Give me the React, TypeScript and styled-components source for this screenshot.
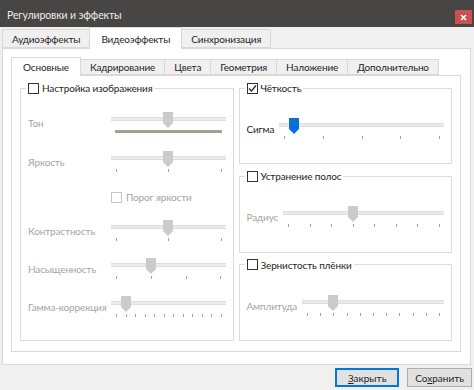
import React from "react";
import styled, { createGlobalStyle } from "styled-components";

const FONT = `Lato, "Noto Sans", "Open Sans", sans-serif`;

const GlobalStyle = createGlobalStyle`
  html, body { margin: 0; padding: 0; background: #f0f0f0; }
  body { font-family: ${FONT}; font-size: 10px; letter-spacing: -0.15px; color: #1e1e1e; }
  *, *::before, *::after { box-sizing: border-box; }
`;

const Window = styled.div`
  width: 474px;
  height: 390px;
  display: flex;
  flex-direction: column;
  background: #f0f0f0;
  overflow: hidden;
`;

const TitleBar = styled.div`
  height: 27px;
  flex: none;
  background: #484644;
  display: flex;
  align-items: center;
  justify-content: space-between;
  padding: 3px 2px 0 7px;
`;

const TitleText = styled.span`
  color: #ececec;
  font-size: 10.5px;
  letter-spacing: -0.1px;
`;

const CloseButton = styled.div`
  width: 17px;
  height: 14px;
  margin-top: 4px;
  background: #c9514f;
  display: flex;
  align-items: center;
  justify-content: center;
`;

const TabRow = styled.div<{ $h: number; $pl: number }>`
  height: ${(p) => p.$h}px;
  flex: none;
  display: flex;
  align-items: flex-end;
  padding-left: ${(p) => p.$pl}px;
  position: relative;
  z-index: 1;
`;

const Tab = styled.div<{ $active?: boolean; $h: number }>`
  height: ${(p) => (p.$active ? p.$h + 1 : p.$h - 2)}px;
  margin-bottom: ${(p) => (p.$active ? -1 : 0)}px;
  padding: 0 ${(p) => (p.$active ? 11 : 9)}px;
  display: flex;
  align-items: center;
  white-space: nowrap;
  border: 1px solid #d9d9d9;
  border-bottom: ${(p) => (p.$active ? "none" : "1px solid #d9d9d9")};
  background: ${(p) => (p.$active ? "#ffffff" : "#f0f0f0")};
  & + & {
    margin-left: -1px;
  }
`;

const OuterPage = styled.div`
  flex: 1;
  min-height: 0;
  margin: 0 3px 0 2px;
  border: 1px solid #d9d9d9;
  background: #ffffff;
  padding: 8px 9px 12px 8px;
  display: flex;
  flex-direction: column;
`;

const InnerPanel = styled.div`
  flex: 1;
  min-height: 0;
  border: 1px solid #d9d9d9;
  padding: 4px 8px 10px 8px;
  display: grid;
  grid-template-columns: 1fr 1fr;
  column-gap: 5px;
`;

const Column = styled.div`
  display: flex;
  flex-direction: column;
  gap: 4px;
  min-width: 0;
`;

const Group = styled.fieldset`
  margin: 0;
  padding: 0 7px;
  min-width: 0;
  border: 1px solid #dcdcdc;
  display: flex;
  flex-direction: column;
  flex: 1;
`;

const Legend = styled.legend`
  padding: 0 2px;
  margin-left: -2px;
  height: 16px;
  display: flex;
  align-items: center;
  gap: 3px;
  line-height: 16px;
  white-space: nowrap;
`;

const Box = styled.span<{ $disabled?: boolean }>`
  width: 11px;
  height: 11px;
  flex: none;
  border: 1px solid ${(p) => (p.$disabled ? "#c4c4c4" : "#333333")};
  background: #ffffff;
  display: inline-flex;
  align-items: center;
  justify-content: center;
`;

const Row = styled.div<{ $mt: number; $gap?: number }>`
  display: flex;
  align-items: flex-start;
  margin-top: ${(p) => p.$mt}px;
  gap: ${(p) => p.$gap ?? 0}px;
`;

const RowLabel = styled.span<{ $w?: number; $disabled?: boolean }>`
  flex: none;
  ${(p) => (p.$w ? `width: ${p.$w}px;` : "")}
  padding-top: 4px;
  line-height: 14px;
  white-space: nowrap;
  color: ${(p) => (p.$disabled ? "#a4a4a4" : "#1e1e1e")};
`;

const CheckRow = styled.div<{ $mt: number; $ml: number }>`
  display: flex;
  align-items: center;
  gap: 4px;
  height: 13px;
  line-height: 13px;
  margin-top: ${(p) => p.$mt}px;
  margin-left: ${(p) => p.$ml}px;
  color: #a4a4a4;
`;

const SliderWrap = styled.div`
  position: relative;
  flex: 1;
  min-width: 0;
  height: 24px;
`;

const Track = styled.div`
  position: absolute;
  left: 0;
  right: 0;
  top: 5px;
  height: 4px;
  background: #ebebeb;
  border-top: 1px solid #dedede;
  border-bottom: 1px solid #dedede;
`;

const ThumbSvg = styled.svg`
  position: absolute;
  top: 0;
  width: 10px;
  height: 16px;
`;

const Ticks = styled.div`
  position: absolute;
  left: 5px;
  right: 4px;
  top: 18px;
  height: 3px;
  display: flex;
  justify-content: space-between;
`;

const Tick = styled.div`
  flex: none;
  width: 1px;
  height: 3px;
  background: #a0a0a0;
`;

const HueBar = styled.div`
  position: absolute;
  left: 4px;
  right: 4px;
  top: 18px;
  height: 3px;
  background: #a3a091;
`;

const Footer = styled.div`
  height: 25px;
  flex: none;
  display: flex;
  justify-content: flex-end;
  align-items: center;
  gap: 8px;
  padding: 0 2px 0 0;
`;

const Button = styled.button<{ $focused?: boolean }>`
  height: 19px;
  min-width: 64px;
  padding: 0 7px;
  font: inherit;
  color: #1e1e1e;
  background: #e1e1e1;
  border: 1px solid ${(p) => (p.$focused ? "#0078d7" : "#adadad")};
  box-shadow: ${(p) => (p.$focused ? "inset 0 0 0 1px #0078d7" : "none")};
  display: flex;
  align-items: center;
  justify-content: center;
  u {
    text-decoration-thickness: 1px;
    text-underline-offset: 1px;
  }
`;

function Check({ checked, disabled }: { checked?: boolean; disabled?: boolean }) {
  return (
    <Box $disabled={disabled}>
      {checked && (
        <svg width="9" height="9" viewBox="0 0 9 9">
          <path d="M1 4.5 L3.5 7 L8 1.5" fill="none" stroke="#222" strokeWidth="1.2" />
        </svg>
      )}
    </Box>
  );
}

function Slider({
  value,
  ticks = 0,
  blue,
  hue,
}: {
  value: number;
  ticks?: number;
  blue?: boolean;
  hue?: boolean;
}) {
  return (
    <SliderWrap>
      <Track />
      <ThumbSvg viewBox="0 0 10 16" style={{ left: `calc((100% - 10px) * ${value})` }}>
        <path d="M0 0 H10 V11 L5 16 L0 11 Z" fill={blue ? "#0a6fd6" : "#cbcbcb"} />
      </ThumbSvg>
      {hue && <HueBar />}
      {ticks > 0 && (
        <Ticks>
          {Array.from({ length: ticks }).map((_, i) => (
            <Tick key={i} />
          ))}
        </Ticks>
      )}
    </SliderWrap>
  );
}

export default function App() {
  return (
    <>
      <GlobalStyle />
      <Window>
        <TitleBar>
          <TitleText>Регулировки и эффекты</TitleText>
          <CloseButton>
            <svg width="7" height="7" viewBox="0 0 7 7">
              <path d="M1 1 L6 6 M6 1 L1 6" stroke="#fff" strokeWidth="1.6" />
            </svg>
          </CloseButton>
        </TitleBar>

        <TabRow $h={21} $pl={2}>
          <Tab $h={21}>Аудиоэффекты</Tab>
          <Tab $h={21} $active>
            Видеоэффекты
          </Tab>
          <Tab $h={21}>Синхронизация</Tab>
        </TabRow>

        <OuterPage>
          <TabRow $h={18} $pl={0}>
            <Tab $h={18} $active>
              Основные
            </Tab>
            <Tab $h={18}>Кадрирование</Tab>
            <Tab $h={18}>Цвета</Tab>
            <Tab $h={18}>Геометрия</Tab>
            <Tab $h={18}>Наложение</Tab>
            <Tab $h={18}>Дополнительно</Tab>
          </TabRow>

          <InnerPanel>
            <Column>
              <Group>
                <Legend>
                  <Check />
                  Настройка изображения
                </Legend>
                <Row $mt={16}>
                  <RowLabel $w={83} $disabled>
                    Тон
                  </RowLabel>
                  <Slider value={0.5} hue />
                </Row>
                <Row $mt={15}>
                  <RowLabel $w={83} $disabled>
                    Яркость
                  </RowLabel>
                  <Slider value={0.5} ticks={3} />
                </Row>
                <CheckRow $mt={16} $ml={83}>
                  <Check disabled />
                  Порог яркости
                </CheckRow>
                <Row $mt={16}>
                  <RowLabel $w={83} $disabled>
                    Контрастность
                  </RowLabel>
                  <Slider value={0.5} ticks={3} />
                </Row>
                <Row $mt={14}>
                  <RowLabel $w={83} $disabled>
                    Насыщенность
                  </RowLabel>
                  <Slider value={1 / 3} ticks={4} />
                </Row>
                <Row $mt={14}>
                  <RowLabel $w={83} $disabled>
                    Гамма-коррекция
                  </RowLabel>
                  <Slider value={0.1} ticks={12} />
                </Row>
              </Group>
            </Column>

            <Column>
              <Group>
                <Legend>
                  <Check checked />
                  Чёткость
                </Legend>
                <Row $mt={22} $gap={5}>
                  <RowLabel>Сигма</RowLabel>
                  <Slider value={0.06} ticks={5} blue />
                </Row>
              </Group>
              <Group>
                <Legend>
                  <Check />
                  Устранение полос
                </Legend>
                <Row $mt={22} $gap={5}>
                  <RowLabel $disabled>Радиус</RowLabel>
                  <Slider value={3 / 7} ticks={8} />
                </Row>
              </Group>
              <Group>
                <Legend>
                  <Check />
                  Зернистость плёнки
                </Legend>
                <Row $mt={22} $gap={5}>
                  <RowLabel $disabled>Амплитуда</RowLabel>
                  <Slider value={0.2} ticks={11} />
                </Row>
              </Group>
            </Column>
          </InnerPanel>
        </OuterPage>

        <Footer>
          <Button $focused>
            <span>
              <u>З</u>акрыть
            </span>
          </Button>
          <Button>
            <span>
              Со<u>х</u>ранить
            </span>
          </Button>
        </Footer>
      </Window>
    </>
  );
}
